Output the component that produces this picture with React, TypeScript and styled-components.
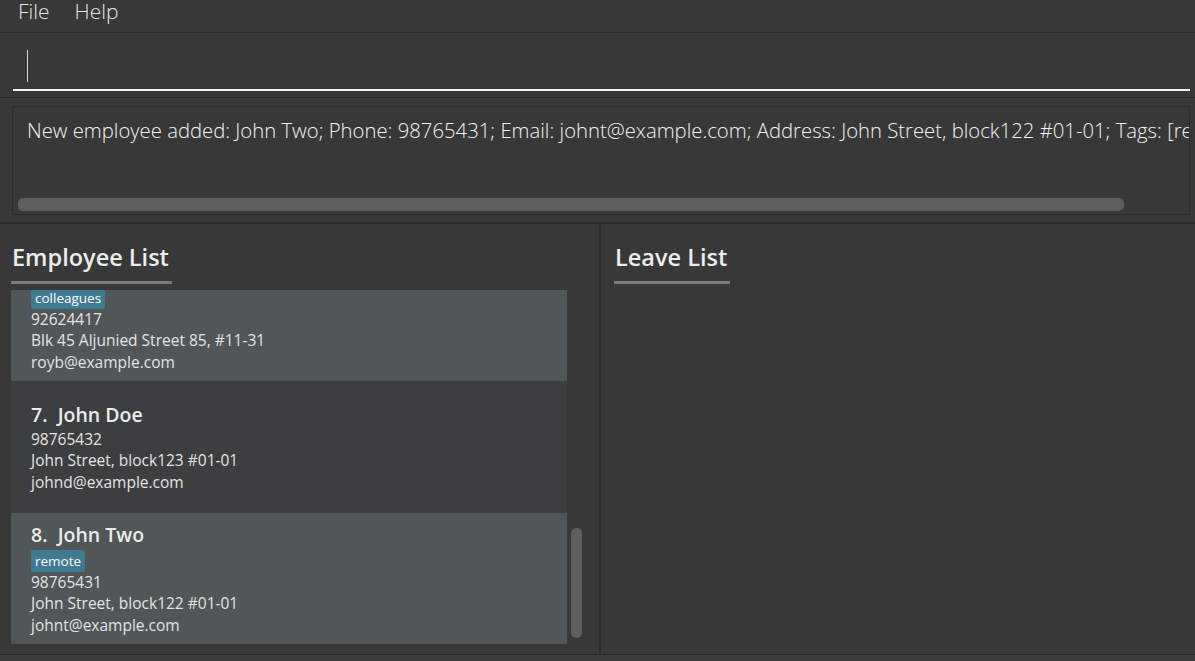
import { useLayoutEffect, useRef } from 'react';
import styled, { createGlobalStyle } from 'styled-components';

interface Employee {
	name: string;
	phone: string;
	address: string;
	email: string;
	tags: string[];
}

const employees: Employee[] = [
	{ name: 'Alex Yeoh', phone: '87438807', address: 'Blk 30 Geylang Street 29, #06-40', email: 'alexyeoh@example.com', tags: ['friends'] },
	{ name: 'Bernice Yu', phone: '99272758', address: 'Blk 30 Lorong 3 Serangoon Gardens, #07-18', email: 'berniceyu@example.com', tags: ['colleagues', 'friends'] },
	{ name: 'Charlotte Oliveiro', phone: '93210283', address: 'Blk 11 Ang Mo Kio Street 74, #11-04', email: 'charlotte@example.com', tags: ['neighbours'] },
	{ name: 'David Li', phone: '91031282', address: 'Blk 436 Serangoon Gardens Street 26, #16-43', email: 'lidavid@example.com', tags: ['family'] },
	{ name: 'Irfan Ibrahim', phone: '92492021', address: 'Blk 47 Tampines Street 20, #17-35', email: 'irfan@example.com', tags: ['classmates'] },
	{ name: 'Roy Balakrishnan', phone: '92624417', address: 'Blk 45 Aljunied Street 85, #11-31', email: 'royb@example.com', tags: ['colleagues'] },
	{ name: 'John Doe', phone: '98765432', address: 'John Street, block123 #01-01', email: 'johnd@example.com', tags: [] },
	{ name: 'John Two', phone: '98765431', address: 'John Street, block122 #01-01', email: 'johnt@example.com', tags: ['remote'] },
];

const GlobalStyle = createGlobalStyle`
	html, body {
		margin: 0;
		padding: 0;
		background: #383838;
		overflow: hidden;
	}
	* {
		box-sizing: border-box;
	}
`;

const Window = styled.div`
	width: 1195px;
	height: 661px;
	display: flex;
	flex-direction: column;
	background: #383838;
	color: #fff;
	font-family: 'Open Sans', 'Noto Sans', sans-serif;
`;

const MenuBar = styled.div`
	height: 33px;
	flex: none;
	display: flex;
	align-items: flex-start;
	gap: 25px;
	padding-left: 18px;
	border-bottom: 1px solid #2b2b2b;
`;

const MenuItem = styled.span`
	font-weight: 300;
	font-size: 21px;
	line-height: 22px;
	color: rgba(255, 255, 255, 0.9);
`;

const CommandBox = styled.div`
	height: 65px;
	flex: none;
	padding: 0 5px 0 13px;
	border-bottom: 1px solid #2b2b2b;
`;

const CommandField = styled.div`
	height: 58px;
	display: flex;
	align-items: flex-end;
	padding: 0 0 7px 14px;
	border-bottom: 2px solid #f2f2f2;
`;

const Caret = styled.div`
	width: 1px;
	height: 32px;
	background: #d8d8d8;
`;

const ResultPane = styled.div`
	height: 126px;
	flex: none;
	padding: 8px 5px 7px 12px;
	border-bottom: 2px solid #2b2b2b;
`;

const ResultBox = styled.div`
	height: 100%;
	border: 1px solid #2c2c2c;
	display: flex;
	flex-direction: column;
	justify-content: space-between;
	overflow: hidden;
`;

const ResultText = styled.div`
	padding: 9px 0 0 14px;
	white-space: nowrap;
	font-weight: 300;
	font-size: 20.3px;
	line-height: 28px;
	color: #f4f4f4;
`;

const HScrollTrack = styled.div`
	padding: 0 0 3px 5px;
`;

const HThumb = styled.div<{ $width: number }>`
	width: ${({ $width }) => $width}px;
	height: 13px;
	border-radius: 5px;
	background: #5e5e5e;
`;

const Panels = styled.div`
	flex: 1;
	display: grid;
	grid-template-columns: 601px 1fr;
	min-height: 0;
`;

const Panel = styled.section<{ $divider?: boolean }>`
	display: flex;
	flex-direction: column;
	min-height: 0;
	padding: 0 15px 9px ${({ $divider }) => ($divider ? 11 : 13)}px;
	border-right: ${({ $divider }) => ($divider ? '2px solid #2b2b2b' : 'none')};
`;

const Title = styled.h2`
	align-self: flex-start;
	margin: 18px 0 6px;
	padding: 0 3px 8px 1px;
	font-size: 23.5px;
	font-weight: 600;
	line-height: 31px;
	color: #ececec;
	border-bottom: 3px solid #7b7b7b;
`;

const ListFrame = styled.div`
	height: 354px;
	display: flex;
`;

const Viewport = styled.div`
	flex: 1;
	overflow: hidden;
`;

const VScrollTrack = styled.div`
	width: 17px;
	flex: none;
	display: flex;
	flex-direction: column;
	justify-content: flex-end;
	padding: 0 2px 6px 4px;
`;

const VThumb = styled.div<{ $height: number }>`
	height: ${({ $height }) => $height}px;
	border-radius: 5px;
	background: #5e5e5e;
`;

const Card = styled.div<{ $odd: boolean }>`
	height: 131.5px;
	display: flex;
	flex-direction: column;
	justify-content: center;
	padding-left: 20px;
	background: ${({ $odd }) => ($odd ? '#515658' : '#3c3e3f')};
`;

const Name = styled.div`
	font-size: 19.5px;
	font-weight: 600;
	line-height: 28px;
	color: #ececec;
`;

const Tags = styled.div`
	display: flex;
	gap: 5px;
	margin: 1px 0 0;
`;

const Tag = styled.span`
	padding: 0 4px;
	border-radius: 2px;
	background: #3e7b91;
	font-size: 13.5px;
	line-height: 22px;
	color: #fff;
`;

const Detail = styled.div`
	font-size: 15.5px;
	line-height: 21.5px;
	color: #e4e4e4;
`;

const StatusBar = styled.div`
	height: 7px;
	flex: none;
	border-top: 1px solid #2b2b2b;
	background: #3d3d3d;
`;

function EmployeeCard({ employee, index }: { employee: Employee; index: number }) {
	return (
		<Card $odd={index % 2 === 1}>
			<Name>
				{index + 1}.&nbsp;&nbsp;{employee.name}
			</Name>
			{employee.tags.length > 0 && (
				<Tags>
					{employee.tags.map((t) => (
						<Tag key={t}>{t}</Tag>
					))}
				</Tags>
			)}
			<Detail>{employee.phone}</Detail>
			<Detail>{employee.address}</Detail>
			<Detail>{employee.email}</Detail>
		</Card>
	);
}

export default function App() {
	const listRef = useRef<HTMLDivElement>(null);

	// list is scrolled to the newest entry
	useLayoutEffect(() => {
		const el = listRef.current;
		if (el) el.scrollTop = el.scrollHeight;
	}, []);

	return (
		<Window>
			<GlobalStyle />
			<MenuBar>
				<MenuItem>File</MenuItem>
				<MenuItem>Help</MenuItem>
			</MenuBar>
			<CommandBox>
				<CommandField>
					<Caret />
				</CommandField>
			</CommandBox>
			<ResultPane>
				<ResultBox>
					<ResultText>
						New employee added: John Two; Phone: 98765431; Email: johnt@example.com; Address: John Street, block122 #01-01; Tags: [remote]
					</ResultText>
					<HScrollTrack>
						<HThumb $width={1106} />
					</HScrollTrack>
				</ResultBox>
			</ResultPane>
			<Panels>
				<Panel $divider>
					<Title>Employee List</Title>
					<ListFrame>
						<Viewport ref={listRef}>
							{employees.map((e, i) => (
								<EmployeeCard key={e.email} employee={e} index={i} />
							))}
						</Viewport>
						<VScrollTrack>
							<VThumb $height={110} />
						</VScrollTrack>
					</ListFrame>
				</Panel>
				<Panel>
					<Title>Leave List</Title>
				</Panel>
			</Panels>
			<StatusBar />
		</Window>
	);
}
